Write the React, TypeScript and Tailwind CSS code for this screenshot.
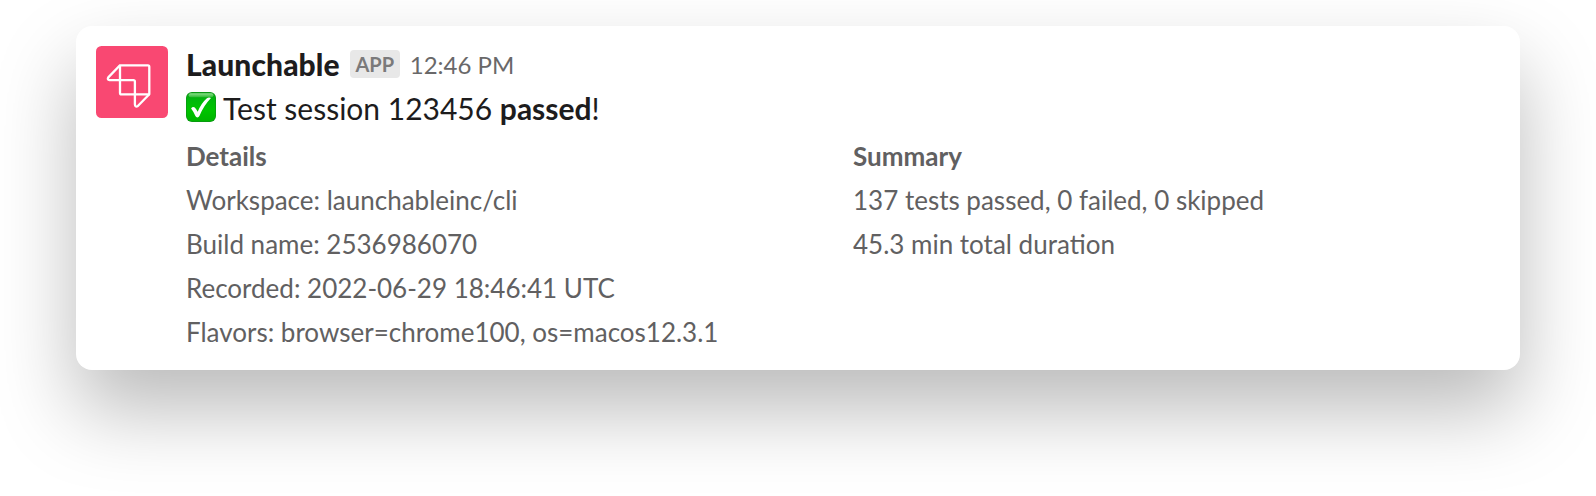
function Avatar() {
  return (
    <svg className="mt-5 size-[72px] shrink-0" viewBox="0 0 72 72" aria-hidden="true">
      <rect width="72" height="72" rx="5.5" fill="#f94872" />
      <g fill="none" stroke="#fff" strokeWidth="2.3" strokeLinejoin="round">
        <path d="M24 19.3H51.9Q53.3 19.3 53.3 20.7V48.3H25.4Q24 48.3 24 46.9Z" />
        <path d="M24 19.3L12.3 31.4Q10.9 33.7 13.6 34.1H37.4Q38.9 34.1 38.9 35.6V58.4Q39.2 61.4 41.6 60.2L53.3 48.3" />
      </g>
    </svg>
  );
}

function CheckMark() {
  return (
    <svg className="mr-[7px] mb-[2px] size-[30px] shrink-0" viewBox="0 0 30 30" aria-hidden="true">
      <defs>
        <linearGradient id="face" x1="0" y1="0" x2="0" y2="1">
          <stop offset="0" stopColor="#0aa014" />
          <stop offset="0.25" stopColor="#00b80c" />
          <stop offset="0.6" stopColor="#00c400" />
          <stop offset="1" stopColor="#00b400" />
        </linearGradient>
        <linearGradient id="gloss" x1="0" y1="0" x2="0" y2="1">
          <stop offset="0" stopColor="#8ce08c" />
          <stop offset="1" stopColor="#2fbb35" />
        </linearGradient>
      </defs>
      <rect width="30" height="30" rx="6" fill="#0a9414" />
      <rect x="0.7" y="0.7" width="28.6" height="28.6" rx="5.5" fill="url(#face)" />
      <rect x="2.6" y="1.2" width="24.8" height="4" rx="2" fill="url(#gloss)" />
      <path d="M5.1 16.4Q6.8 14 8.8 15.5Q10.5 17.2 11.7 19.7Q15.3 11 20.9 6.2Q22.9 4.9 25 6Q17.4 13.9 13.4 24.1Q12.7 25.4 11.4 25.4Q10 25.4 9.4 24.1Q7.6 19.5 5.1 16.4Z" fill="#fff" />
    </svg>
  );
}

function Field({ title, lines }: { title: string; lines: string[] }) {
  return (
    <div className="text-[26px] leading-[44px] text-[#616061]">
      <h2 className="font-bold">{title}</h2>
      {lines.map((line) => (
        <p key={line}>{line}</p>
      ))}
    </div>
  );
}

export default function App() {
  return (
    <main className="h-[496px] overflow-hidden bg-white px-[76px] pt-[26px] font-['Lato',sans-serif] text-[#1d1c1d]">
      <article className="flex h-[344px] gap-[18px] rounded-2xl bg-white px-5 shadow-[0_40px_80px_rgba(0,0,0,0.27)]">
        <Avatar />
        <div className="flex-1 pt-4">
          <header className="flex h-11 items-center">
            <span className="text-[30px] leading-[44px] font-black tracking-[0.1px]">Launchable</span>
            <span className="mr-[10px] ml-[10px] flex h-7 w-[50px] items-center justify-center rounded bg-[#e8e8e8] text-[20px] leading-7 font-bold text-[#7b7a7b]">
              APP
            </span>
            <time className="pt-[2px] text-[24px] leading-[44px] text-[#696869]">12:46 PM</time>
          </header>
          <div className="flex h-11 items-center text-[30px] leading-[44px]">
            <CheckMark />
            <p>
              Test session 123456 <strong className="font-bold">passed</strong>!
            </p>
          </div>
          <div className="mt-1 grid grid-cols-[667px_1fr]">
            <Field
              title="Details"
              lines={[
                "Workspace: launchableinc/cli",
                "Build name: 2536986070",
                "Recorded: 2022-06-29 18:46:41 UTC",
                "Flavors: browser=chrome100, os=macos12.3.1",
              ]}
            />
            <Field
              title="Summary"
              lines={["137 tests passed, 0 failed, 0 skipped", "45.3 min total duration"]}
            />
          </div>
        </div>
      </article>
    </main>
  );
}
